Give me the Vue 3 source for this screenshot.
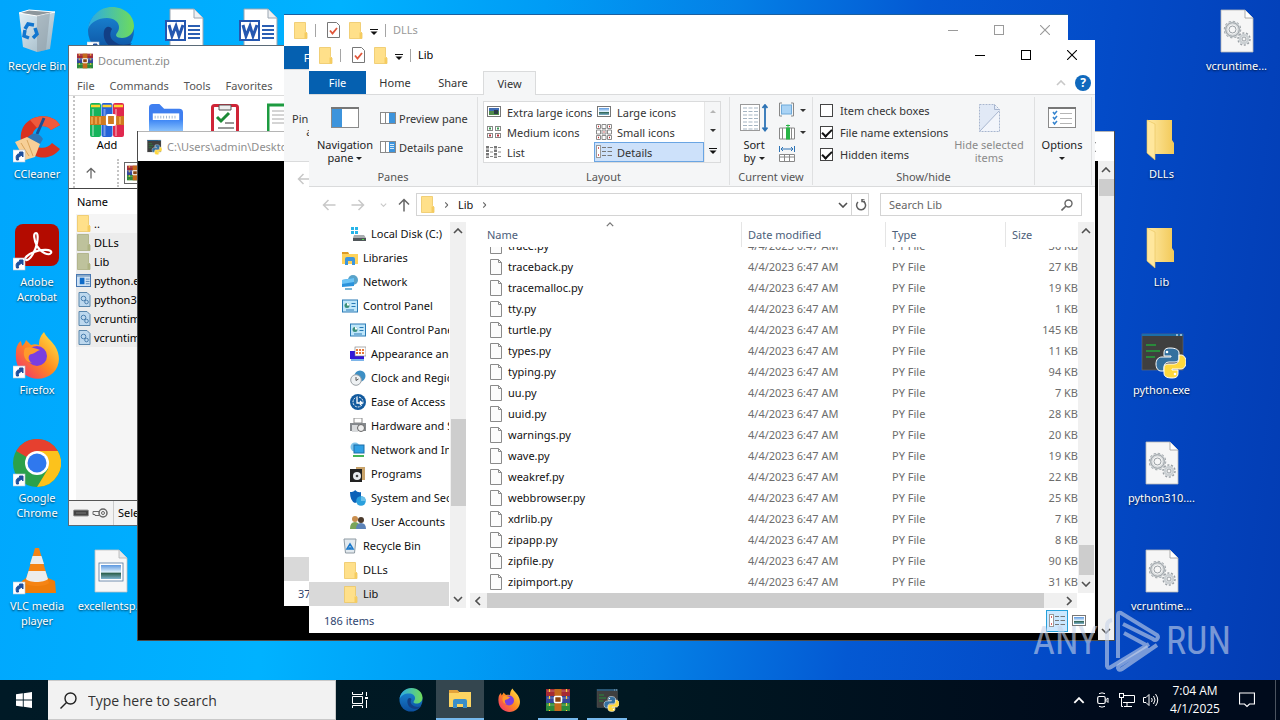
<template>
    <div class="screen">
        <svg class="sprite" aria-hidden="true">
            <defs>
                <linearGradient id="g-edge" x1="0" y1="0" x2="1" y2="0">
                    <stop offset="0" stop-color="#2aa9e8" />
                    <stop offset="1" stop-color="#6fdc5a" />
                </linearGradient>
                <linearGradient id="g-edge2" x1="0" y1="0" x2="0" y2="1">
                    <stop offset="0" stop-color="#1b8ad8" />
                    <stop offset="1" stop-color="#0c4f9e" />
                </linearGradient>
                <linearGradient id="g-fox" x1="1" y1="0" x2="0" y2="1">
                    <stop offset="0" stop-color="#fff04a" />
                    <stop offset="0.5" stop-color="#ff8a1f" />
                    <stop offset="1" stop-color="#f0257a" />
                </linearGradient>
                <linearGradient id="g-bin" x1="0" y1="0" x2="1" y2="1">
                    <stop offset="0" stop-color="#f5f7f8" />
                    <stop offset="1" stop-color="#a9b4bb" />
                </linearGradient>
                <linearGradient id="g-sheet" x1="0" y1="0" x2="1" y2="0">
                    <stop offset="0" stop-color="#ffeaa6" />
                    <stop offset="1" stop-color="#f2c958" />
                </linearGradient>
                <linearGradient id="g-blue" x1="0" y1="0" x2="0" y2="1">
                    <stop offset="0" stop-color="#3f87f5" />
                    <stop offset="1" stop-color="#a9dbff" />
                </linearGradient>
                <linearGradient id="g-photo" x1="0" y1="0" x2="0" y2="1">
                    <stop offset="0" stop-color="#5c98e0" />
                    <stop offset="0.5" stop-color="#dceefa" />
                    <stop offset="0.6" stop-color="#2f6350" />
                    <stop offset="1" stop-color="#7fb3cf" />
                </linearGradient>
            </defs>

            <!-- desktop icons -->
            <symbol id="i-shortcut" viewBox="0 0 48 48">
                <rect x="0" y="35" width="12" height="12" fill="#fff" stroke="#b9c7d6" stroke-width=".6" />
                <path d="M3.500 45c-1-4 0-6 3-6.300V37H10v5L8.500 40.500C6 41 5 43 5.500 45z" fill="#1e4f9c" stroke="#1e4f9c" />
            </symbol>
            <symbol id="i-bin" viewBox="0 0 48 48">
                <path d="M6 6l10-3 26 2-5 37-13 3-14-5z" fill="url(#g-bin)" opacity=".92" />
                <path d="M6 6l18 3 18-4-26-2z" fill="#8d979d" stroke="#fff" stroke-width="1" />
                <path d="M24 9l13-3-4 37-9 2z" fill="#8c989f" opacity=".5" />
                <path d="M12 22l3-5 6 1M22 21l2 6-4 4M16 31l-5-2 1-6" fill="none" stroke="#1276cf" stroke-width="3.500" />
            </symbol>
            <symbol id="i-edge" viewBox="0 0 48 48">
                <circle cx="24" cy="24" r="23" fill="url(#g-edge2)" />
                <path d="M1 22C3 9 13 0 25 0c13 0 22 9 22 19 0 8-6 12-12 12-6 0-7-3-5-5 1-2 2-3 2-6 0-5-5-9-12-9C11 11 4 15 1 22z" fill="url(#g-edge)" />
                <path d="M17 24c-2 11 7 19 17 18 4 0 8-2 11-6-5 2-12 3-17-1-5-3-6-8-3-13-3-4-7-2-8 2z" fill="#123f86" />
            </symbol>
            <symbol id="i-word" viewBox="0 0 48 48">
                <path d="M9 2h24l9 9v37H9z" fill="#fff" stroke="#9aa5b1" stroke-width="1" />
                <path d="M33 2v9h9" fill="#edf0f3" stroke="#9aa5b1" stroke-width="1" />
                <path d="M27 19h12M27 23h12M27 27h12M27 31h12" stroke="#2b5fb3" stroke-width="2" />
                <rect x="5" y="14" width="19" height="19" fill="#fff" stroke="#2457b0" stroke-width="2" />
                <path d="M8 18l3 11 4-10 3 10 4-11" fill="none" stroke="#2457b0" stroke-width="3" />
            </symbol>
            <symbol id="i-ccleaner" viewBox="0 0 48 48">
                <path d="M47 10C41 0 26-1 17 5 9 10 7 18 8 27l7 9c8 9 24 9 32-2l-8-6c-5 7-16 6-19-1-3-8 2-15 9-16 4 0 7 1 9 4z" fill="#d9321f" />
                <path d="M17 5C26-1 41 0 47 10l-9 5c-3-4-9-5-14-2z" fill="#ef5a3c" />
                <path d="M31 3L24 19" stroke="#1d4f93" stroke-width="3" />
                <path d="M14 24c2-6 12-8 16 0l-3 5z" fill="#2f77b8" />
                <path d="M2 27l12-5 13 7-5 13-10 3z" fill="#f7cf97" />
                <path d="M8 28l8 13M14 25l6 16" stroke="#d9a45c" stroke-width="1" />
            </symbol>
            <symbol id="i-acrobat" viewBox="0 0 48 48">
                <rect x="2" y="1" width="44" height="42" rx="8" fill="#b30b00" />
                <path d="M23 10c-3 0-2 7 1 13 4 7 12 10 14 7 2-4-10-4-17-1-6 2-11 7-8 8 4 1 10-10 11-17 1-5 1-10-1-10z" fill="none" stroke="#fff" stroke-width="2.200" />
            </symbol>
            <symbol id="i-firefox" viewBox="0 0 48 48">
                <path d="M3 21c0-5 2-9 5-11l1 5c2-2 3-3 4-6l5 5c3-1 5-1 8 0 0-6 2-10 5-13 2 5 7 8 11 14 6 10 5 20-2 27-8 7-20 8-29 1C5 38 2 30 3 21z" fill="url(#g-fox)" />
                <circle cx="24" cy="25" r="10" fill="#7a3ee0" />
                <path d="M12 17c5-2 10 0 15 2-4 1-4 3-8 4-4 0-5 6 0 9-7-1-10-8-7-15z" fill="#ff9a2a" />
            </symbol>
            <symbol id="i-chrome" viewBox="0 0 48 48">
                <circle cx="24" cy="24" r="24" fill="#2ba14b" />
                <path d="M24 24L3.200 12A24 24 0 0 1 44.800 12z" fill="#e6402f" />
                <path d="M24 12h20.800A24 24 0 0 1 24 48l11-18z" fill="#fcc21c" />
                <circle cx="24" cy="24" r="12" fill="#fff" />
                <circle cx="24" cy="24" r="9.500" fill="#2f78ee" />
            </symbol>
            <symbol id="i-vlc" viewBox="0 0 48 48">
                <path d="M13 31h22l7 3 1 12H4l5-12z" fill="#ee7d0b" />
                <path d="M22 1h4l10 35c-3 4-21 4-24 0z" fill="#f58414" />
                <path d="M19.500 9h9l2.500 8H17zM15.500 24h17l2.500 8c-4 4-19 4-22 0z" fill="#ececec" />
            </symbol>
            <symbol id="i-image" viewBox="0 0 48 48">
                <path d="M8 3h24l8 8v34H8z" fill="#f7f7f7" stroke="#c2c2c2" stroke-width=".8" />
                <path d="M32 3v8h8" fill="#e4e8ec" stroke="#b3b3b3" stroke-width=".8" />
                <rect x="12" y="16" width="24" height="18" fill="#fff" stroke="#54779e" stroke-width=".8" />
                <rect x="14" y="18" width="20" height="14" fill="url(#g-photo)" />
            </symbol>
            <symbol id="i-bigfolder" viewBox="0 0 48 48">
                <path d="M9 5h25v20l2 3v11H17z" fill="url(#g-sheet)" />
                <path d="M9 5l8 4v36l-8-7z" fill="#ffe79d" stroke="#e7c35c" stroke-width=".6" />
            </symbol>
            <symbol id="i-dll" viewBox="0 0 48 48">
                <path d="M8 3h24l8 8v34H8z" fill="#f6f6f6" stroke="#b9b9b9" stroke-width=".8" />
                <path d="M32 3v8h8" fill="#fff" stroke="#9b9b9b" stroke-width=".8" />
                <g fill="none" stroke="#9aa0a5">
                    <circle cx="19.500" cy="22.500" r="8" stroke-width="1.500" stroke-dasharray="2.200 2" />
                    <circle cx="19.500" cy="22.500" r="6.500" stroke="#d4d8da" stroke-width="3" />
                    <circle cx="19.500" cy="22.500" r="6.800" stroke-width="1" />
                    <circle cx="19.500" cy="22.500" r="3.500" stroke-width="1" />
                    <circle cx="31" cy="32" r="6" stroke-width="1.500" stroke-dasharray="2 1.700" />
                    <circle cx="31" cy="32" r="4" stroke="#cbd0d3" stroke-width="2.500" />
                    <circle cx="31" cy="32" r="2" stroke-width="1" />
                </g>
            </symbol>
            <symbol id="i-python" viewBox="0 0 48 48">
                <rect x="4" y="3" width="41" height="36" fill="#3f3f3f" stroke="#6a6a6a" stroke-width=".6" />
                <rect x="4" y="3" width="41" height="2" fill="#1c6ea8" />
                <path d="M38 4h2M42 4h2" stroke="#fff" />
                <path d="M8 14h10M8 20h14M8 26h9" stroke="#24a33b" stroke-width="1.500" />
                <path d="M32 17c-5 0-6 2-6 5v3h7v1h-9c-4 0-6 3-6 7s2 7 5 7h3v-4c0-3 2-5 5-5h6c3 0 4-2 4-4v-5c0-3-3-5-9-5z" fill="#34709f" stroke="#fff" stroke-width="1" />
                <path d="M34 47c5 0 6-2 6-5v-3h-6v-1h9c3 0 5-3 5-7s-2-7-5-7h-2v4c0 3-2 5-5 5h-6c-3 0-4 2-4 4v5c0 3 2 5 8 5z" fill="#ffd83d" stroke="#fff" stroke-width="1" />
                <circle cx="29" cy="21" r="1.300" fill="#fff" />
                <circle cx="37" cy="43" r="1.300" fill="#fff" />
            </symbol>

            <!-- archiver -->
            <symbol id="i-rar" viewBox="0 0 24 24">
                <rect y="1" width="24" height="7" fill="#a52a34" />
                <rect y="8" width="24" height="7" fill="#34479b" />
                <rect y="15" width="24" height="8" fill="#2b8a3c" />
                <path d="M1 3h22M1 10h22M1 17h22" stroke="#fff" stroke-width="1" opacity=".3" />
                <path d="M3.500 1v22M20.500 1v22" stroke="#ffce3a" stroke-width="1.200" stroke-dasharray="3 4" />
                <rect x="8.500" y="1" width="7" height="22" fill="#c46a1c" />
                <rect x="8.500" y="8.500" width="7" height="6" rx="1" fill="#8a4310" stroke="#fff" stroke-width="1.600" />
            </symbol>
            <symbol id="i-books" viewBox="0 0 34 34">
                <rect x="0" y="0" width="11" height="34" rx="2" fill="#17b45c" />
                <rect x="11.500" y="0" width="11" height="34" rx="2" fill="#2563d8" />
                <rect x="23" y="0" width="11" height="34" rx="2" fill="#e0284e" />
                <path d="M1 3h9M12.500 3h9M24 3h9" stroke="#ffd42e" stroke-width="2.500" />
                <path d="M3 6v27M14.500 6v27M26 6v27" stroke="#fff" stroke-width="2" opacity=".35" />
                <path d="M0 13h34v9H0z" fill="#cf7a1f" />
                <path d="M2 14v7M6 14v7M10 14v7M30 14v7" stroke="#f2ad55" stroke-width="1.500" />
                <rect x="17" y="12" width="8" height="10" rx="1" fill="#cf7a1f" stroke="#fff" stroke-width="2.200" />
            </symbol>
            <symbol id="i-extract" viewBox="0 0 36 34">
                <path d="M0 4q0-4 4-4h7l5 5h16q4 0 4 4v25H0z" fill="#3f7ff0" />
                <path d="M4 10h28v12H4z" fill="#fff" />
                <path d="M6 14h24" stroke="#9fb4cf" stroke-width="3" stroke-dasharray="1 2" />
                <path d="M0 17h36v17H0z" fill="url(#g-blue)" />
            </symbol>
            <symbol id="i-test" viewBox="0 0 28 34">
                <rect x="1.500" y="2.500" width="25" height="31" rx="2" fill="#fff" stroke="#cf2437" stroke-width="3" />
                <path d="M8 2h12v5H8z" fill="#eee" stroke="#555" />
                <path d="M6 14l4 4 8-8" fill="none" stroke="#1c8a36" stroke-width="3" />
                <path d="M14 20h9M7 25h16" stroke="#777" stroke-width="1.500" />
            </symbol>
            <symbol id="i-view" viewBox="0 0 34 34">
                <path d="M1 2h25v32H1z" fill="#fff" stroke="#1d9b40" stroke-width="3" />
                <path d="M26 3h7v31h-7z" fill="#fff" stroke="#cf2437" stroke-width="3" />
                <path d="M5 8h18M5 12h18M5 16h18M5 20h18" stroke="#aaa" />
            </symbol>
            <symbol id="i-exe" viewBox="0 0 16 14">
                <rect x=".5" y=".5" width="15" height="13" fill="#cfe2f4" stroke="#3c6fae" />
                <path d="M1 1h14v2H1z" fill="#89a9c8" />
                <rect x="4" y="4" width="5" height="7" fill="#0f6bc8" />
                <path d="M10.500 5.500h4M10.500 8h4M10.500 10.500h4" stroke="#5585b5" />
            </symbol>
            <symbol id="i-dllsmall" viewBox="0 0 12 15">
                <path d="M.5.5h8l3 3v11H.5z" fill="#bdd8ee" stroke="#5a87ad" />
                <circle cx="5" cy="6.500" r="2.300" fill="none" stroke="#4b7fae" />
                <circle cx="8" cy="10" r="1.800" fill="none" stroke="#4b7fae" />
            </symbol>
            <symbol id="i-drive" viewBox="0 0 16 9">
                <rect x=".5" y="1.500" width="15" height="6" rx="1" fill="#444" stroke="#999" />
                <path d="M3 4.500h10" stroke="#777" />
            </symbol>
            <symbol id="i-key" viewBox="0 0 16 11">
                <circle cx="11" cy="5.500" r="4" fill="none" stroke="#666" stroke-width="1.500" />
                <circle cx="11" cy="5.500" r="1.500" fill="none" stroke="#666" />
                <path d="M7 4H1v3h2v1h4" fill="none" stroke="#666" />
            </symbol>

            <!-- explorer -->
            <symbol id="i-folder" viewBox="0 0 14 17">
                <path d="M.5.5h11v9l1.500 1.500v5.500H.5z" fill="#ffe08a" stroke="#edc763" stroke-width=".8" />
                <path d="M10.500 10.500h2.500v6h-2.500z" fill="#f5cc60" />
            </symbol>
            <symbol id="i-props" viewBox="0 0 13 16">
                <path d="M.5.5h9l3 3v12H.5z" fill="#fff" stroke="#777" />
                <path d="M3 8.500l2.500 3L10 6" fill="none" stroke="#e0563a" stroke-width="1.800" />
            </symbol>
            <symbol id="i-qat" viewBox="0 0 8 6">
                <path d="M0 .5h8" stroke="#111" />
                <path d="M.5 2.500h7L4 6z" fill="#111" />
            </symbol>
            <symbol id="i-caret" viewBox="0 0 6 3"><path d="M0 0h6L3 3z" fill="currentColor" /></symbol>
            <symbol id="i-chev" viewBox="0 0 10 6">
                <path d="M1 1l4 4 4-4" fill="none" stroke="currentColor" stroke-width="1.600" />
            </symbol>
            <symbol id="i-arrow" viewBox="0 0 14 12">
                <path d="M13.500 6H1.500M6.500 1l-5 5 5 5" fill="none" stroke="currentColor" stroke-width="1.500" />
            </symbol>
            <symbol id="i-min" viewBox="0 0 10 10"><path d="M0 5.500h10" stroke="currentColor" /></symbol>
            <symbol id="i-max" viewBox="0 0 10 10">
                <rect x=".5" y=".5" width="9" height="9" fill="none" stroke="currentColor" />
            </symbol>
            <symbol id="i-close" viewBox="0 0 10 10">
                <path d="M0 0l10 10M10 0L0 10" stroke="currentColor" stroke-width="1.100" />
            </symbol>
            <symbol id="i-file" viewBox="0 0 12 16">
                <path d="M.5.5h8l3 3v12H.5z" fill="#fcfcfc" stroke="#8a8a8a" />
                <path d="M8.500.5v3h3" fill="none" stroke="#8a8a8a" />
            </symbol>
            <symbol id="i-navpane" viewBox="0 0 28 21">
                <rect x=".5" y=".5" width="27" height="20" fill="#fff" stroke="#8a8a8a" />
                <path d="M0 1h28" stroke="#777" stroke-width="2" />
                <rect x="1" y="2" width="10" height="18" fill="#3d94dc" />
            </symbol>
            <symbol id="i-preview" viewBox="0 0 16 12">
                <rect x=".5" y=".5" width="15" height="11" fill="#fff" stroke="#8a8a8a" />
                <path d="M5.500 1v10" stroke="#8a8a8a" />
                <rect x="9" y="1" width="6" height="10" fill="#3d94dc" />
            </symbol>
            <symbol id="i-detpane" viewBox="0 0 16 12">
                <rect x=".5" y=".5" width="15" height="11" fill="#fff" stroke="#8a8a8a" />
                <path d="M5.500 1v10" stroke="#8a8a8a" />
                <rect x="9" y="1" width="6" height="10" fill="#3d94dc" />
                <path d="M10 3.500h4M10 5.500h4M10 7.500h4" stroke="#d5e9f8" />
            </symbol>
            <symbol id="i-pic" viewBox="0 0 16 14">
                <rect x="1.500" y="1.500" width="13" height="10" fill="#fff" stroke="#777" />
                <rect x="3" y="3" width="10" height="7" fill="url(#g-photo)" />
            </symbol>
            <symbol id="i-xlpic" viewBox="0 0 16 14">
                <rect x="1.500" y="1.500" width="13" height="10" fill="#fff" stroke="#777" />
                <rect x="3" y="3" width="10" height="7" fill="#4f8a49" />
                <rect x="3" y="3" width="10" height="3" fill="#3f6cb5" />
                <rect x="8" y="5" width="4" height="4" fill="#2c3c46" />
            </symbol>
            <symbol id="i-medium" viewBox="0 0 16 14">
                <g fill="#fff" stroke="#888">
                    <rect x="1.500" y="1.500" width="5" height="4" /><rect x="9.500" y="1.500" width="5" height="4" />
                    <rect x="1.500" y="8.500" width="5" height="4" /><rect x="9.500" y="8.500" width="5" height="4" />
                </g>
                <path d="M3 3.500h2M11 3.500h2" stroke="#3a9a52" stroke-width="2" />
                <path d="M3 10.500h2M11 10.500h2" stroke="#b8323a" stroke-width="2" />
            </symbol>
            <symbol id="i-small" viewBox="0 0 16 16">
                <g fill="#fff" stroke="#8a8a8a">
                    <path d="M.5.5h4v4h-4zM6 .5h4v4H6zM11.500.5h4v4h-4zM.5 6h4v4h-4zM6 6h4v4H6zM11.500 6h4v4h-4zM.5 11.500h4v4h-4zM6 11.500h4v4H6zM11.500 11.500h4v4h-4z" />
                </g>
                <path d="M2 2.500h1M7.500 8h1M2 13.500h1M13 2.500h1M13 13.500h1" stroke="#c33" stroke-width="1.500" />
            </symbol>
            <symbol id="i-list" viewBox="0 0 16 14">
                <path d="M1.500 1v12M9.500 1v12" stroke="#777" stroke-width="3" stroke-dasharray="2.500 1" fill="none" />
                <path d="M4 2.500h3M4 7h3M4 11.500h3M12 2.500h3M12 7h3M12 11.500h3" stroke="#888" />
            </symbol>
            <symbol id="i-details" viewBox="0 0 16 14">
                <rect x=".5" y=".5" width="4" height="12" fill="#fff" stroke="#999" />
                <path d="M2 3h1M2 10h1" stroke="#c33" stroke-width="1.500" />
                <path d="M6 2.500h4M11.500 2.500H16M6 6.500h4M11.500 6.500H16M6 10.500h4M11.500 10.500H16" stroke="#777" />
            </symbol>
            <symbol id="i-sort" viewBox="0 0 28 28">
                <rect x=".5" y=".5" width="19" height="26" fill="#fff" stroke="#9a9a9a" />
                <path d="M3 4h15M3 7.500h15M3 11h15M3 14.500h15M3 18h15M3 21.500h15M3 25h15" stroke="#a5b5c3" stroke-dasharray="4 1.500" />
                <path d="M25 2v23M22.500 4L25 1l2.500 3M22.500 23.500l2.500 3 2.500-3" fill="none" stroke="#2d73b5" stroke-width="1.800" />
            </symbol>
            <symbol id="i-group" viewBox="0 0 16 15">
                <path d="M3 .5H.5v13H3M12 .5h2.500v13H12" fill="none" stroke="#888" />
                <rect x="2.500" y="2.500" width="10" height="9" fill="#a9d3f5" stroke="#6fa9d9" />
            </symbol>
            <symbol id="i-addcol" viewBox="0 0 16 15">
                <path d="M.5 3.500h15v11H.5zM3.500 3.500v11M12.500 3.500v11" fill="#fff" stroke="#888" />
                <rect x="7" y="3" width="4" height="12" fill="#28b446" />
                <path d="M7 1h4M9 0v3" stroke="#28b446" />
            </symbol>
            <symbol id="i-sizecol" viewBox="0 0 16 16">
                <path d="M.5 0v6M15.500 0v6M2 3h12M4 1L2 3l2 2M12 1l2 2-2 2" fill="none" stroke="#2d73b5" />
                <path d="M.5 8.500h15v7H.5zM.5 11h15M5.500 9v7M10.500 9v7" fill="#fff" stroke="#888" />
            </symbol>
            <symbol id="i-hide" viewBox="0 0 21 28">
                <path d="M.5.5h15l5 5v22H.5z" fill="#f2f5fb" stroke="#a8b6cf" stroke-dasharray="2 1" />
                <path d="M1 27L20 7 15 1H1z" fill="#e1e9f6" />
                <path d="M.5 27.500L20 7M15.500.5v5h5" fill="none" stroke="#a8b6cf" />
            </symbol>
            <symbol id="i-options" viewBox="0 0 28 21">
                <rect x=".5" y=".5" width="27" height="20" fill="#fff" stroke="#8a8a8a" />
                <path d="M0 1h28" stroke="#777" stroke-width="2" />
                <path d="M5 5l1.500 2L9 4M5 10l1.500 2L9 9M5 15l1.500 2L9 14" fill="none" stroke="#3785cf" stroke-width="1.500" />
                <path d="M12 6.500h12M12 11.500h12M12 16.500h12" stroke="#b5b5b5" />
            </symbol>
            <symbol id="i-refresh" viewBox="0 0 12 12">
                <path d="M3 3a4.500 4.500 0 1 0 5.500-.5M7 0h2.500M10 2.500H7V0" fill="none" stroke="#5e5e5e" stroke-width="1.500" />
            </symbol>
            <symbol id="i-search" viewBox="0 0 12 12">
                <circle cx="7.500" cy="4.500" r="3.500" fill="none" stroke="currentColor" stroke-width="1.400" />
                <path d="M5 7L.5 11.500" stroke="currentColor" stroke-width="1.600" />
            </symbol>

            <!-- navigation tree -->
            <symbol id="t-disk" viewBox="0 0 16 16">
                <path d="M1 1h3v3H1zM5 1h3v3H5zM1 5h3v3H1zM5 5h3v3H5z" fill="#27b4e8" />
                <path d="M4 9h10l2 3v3H3v-3z" fill="#a9adb0" />
                <path d="M3 12h13v3H3z" fill="#50565a" />
                <path d="M12 13.500h2" stroke="#4fe04a" />
            </symbol>
            <symbol id="t-lib" viewBox="0 0 16 16">
                <path d="M0 2h6l1 2h9v10H0z" fill="#ffd35a" />
                <path d="M0 2h6l1 2H0z" fill="#dd9c27" />
                <path d="M3 15V9q0-2 2-2h6q2 0 2 2v6h-3v-4H6v4z" fill="#3d95dd" />
            </symbol>
            <symbol id="t-net" viewBox="0 0 16 16">
                <circle cx="11" cy="6" r="5" fill="#5aa3c9" />
                <path d="M0 6l12-2v8L0 13z" fill="#2b93dc" />
                <path d="M0 6l12-2v4L0 10z" fill="#6cc4f5" />
                <path d="M3 15h7" stroke="#4a9bc7" stroke-width="1.500" />
            </symbol>
            <symbol id="t-panel" viewBox="0 0 16 13">
                <rect x=".5" y=".5" width="15" height="12" fill="#bfe6fa" stroke="#2a7bb6" />
                <circle cx="5" cy="6" r="2.500" fill="#3b8f7a" />
                <path d="M5 6V3.500A2.500 2.500 0 0 1 7.500 6z" fill="#fff" />
                <path d="M9.500 4h4M9.500 7h4M4 10.500h8" stroke="#2a7bb6" />
            </symbol>
            <symbol id="t-look" viewBox="0 0 16 14">
                <rect x="0" y="4" width="14" height="8" fill="#3018d8" />
                <rect x="5" y="0" width="11" height="9" fill="#fff" stroke="#777" stroke-width=".6" />
                <path d="M6 3h9M6 6h9" stroke="#e87a3a" stroke-width="2" stroke-dasharray="2 1" />
                <path d="M1 13h13" stroke="#7db5e8" stroke-width="2" />
            </symbol>
            <symbol id="t-clock" viewBox="0 0 16 16">
                <circle cx="10" cy="6" r="5.500" fill="#3d8fc4" />
                <circle cx="6" cy="10" r="5.300" fill="#eef1f3" stroke="#9aa0a5" />
                <path d="M6 7v3.500l2.500-1.500" fill="none" stroke="#555" />
            </symbol>
            <symbol id="t-ease" viewBox="0 0 16 16">
                <circle cx="8" cy="8" r="8" fill="#125a9e" />
                <circle cx="8" cy="8" r="5" fill="none" stroke="#fff" stroke-dasharray="2 1" />
                <path d="M7 4v5h5M10 7l2 2-2 2" fill="none" stroke="#fff" stroke-width="1.300" />
            </symbol>
            <symbol id="t-printer" viewBox="0 0 16 16">
                <path d="M4 0h8v5H4z" fill="#fff" stroke="#8b8b8b" />
                <path d="M0 5h16v8H0z" fill="#85898d" />
                <path d="M2 7h6v7H2z" fill="#d8dadc" />
                <circle cx="11" cy="10" r="3.500" fill="#eee" stroke="#666" />
            </symbol>
            <symbol id="t-inet" viewBox="0 0 16 16">
                <circle cx="5" cy="5" r="4.500" fill="#7ec3ea" />
                <rect x="4" y="3" width="10" height="8" fill="#2f9fe4" stroke="#1c6ea8" />
                <path d="M3 14h11" stroke="#44b556" stroke-width="2" />
            </symbol>
            <symbol id="t-prog" viewBox="0 0 16 16">
                <path d="M6 1h9v13H6z" fill="#c9a36a" />
                <rect x="0" y="3" width="12" height="13" fill="#222" />
                <circle cx="7" cy="10" r="4" fill="#e9ecef" />
                <circle cx="7" cy="10" r="1.300" fill="#444" />
            </symbol>
            <symbol id="t-sec" viewBox="0 0 16 16">
                <path d="M0 2q4 0 5-2 3 3 6 2v5q-2 5-6 6Q0 11 0 2z" fill="#0c62b8" />
                <circle cx="11" cy="11" r="4.800" fill="#2aa0dd" />
                <path d="M11 11V6.200A4.800 4.800 0 0 1 15.800 11z" fill="#6cc1ea" />
            </symbol>
            <symbol id="t-users" viewBox="0 0 16 16">
                <circle cx="5" cy="5" r="3" fill="#c98e4e" />
                <path d="M0 15q0-7 5-7t5 7z" fill="#7aa45a" />
                <circle cx="11" cy="6" r="3" fill="#4b3a2c" />
                <path d="M6 15q0-6 5-6t5 6z" fill="#5c83b8" />
            </symbol>
            <symbol id="t-bin" viewBox="0 0 16 16">
                <path d="M2 1h12l-1.500 14h-9z" fill="#e3eaef" stroke="#8e9aa3" />
                <path d="M5 11l3-5 3 5zM7 10h2" fill="none" stroke="#1a79cc" stroke-width="1.600" />
            </symbol>

            <!-- taskbar -->
            <symbol id="b-win" viewBox="0 0 16 16">
                <path d="M0 2.300L6.800 1.300v6.300H0zM7.700 1.200L16 0v7.600H7.700zM0 8.500h6.800v6.300L0 13.800zM7.700 8.500H16V16l-8.300-1.200z" fill="#fff" />
            </symbol>
            <symbol id="b-search" viewBox="0 0 17 17">
                <circle cx="10.500" cy="6.500" r="5.500" fill="none" stroke="currentColor" stroke-width="1.400" />
                <path d="M6.500 10.500l-6 6" stroke="currentColor" stroke-width="1.400" />
            </symbol>
            <symbol id="b-taskview" viewBox="0 0 16 16">
                <path d="M.5 0v2.500h10V0M.5 16v-2.500h10V16M.5 4.500h10v7H.5zM14.500 0v4M14.500 8v8" fill="none" stroke="#fff" />
                <path d="M13 5h3v2h-3z" fill="#fff" />
            </symbol>
            <symbol id="b-explorer" viewBox="0 0 24 24">
                <path d="M1 3h8l2 2h12v15H1z" fill="#fcd462" />
                <path d="M1 3h8l2 2v1H1z" fill="#e3a33a" />
                <path d="M5 21v-7q0-2 2-2h10q2 0 2 2v7h-4v-4H9v4z" fill="#3b8fc9" />
            </symbol>
            <symbol id="b-cam" viewBox="0 0 12 16">
                <rect x=".7" y="4.500" width="7.500" height="7" rx="1.500" fill="none" stroke="#fff" stroke-width="1.200" />
                <path d="M8.500 8l2.500-2v4.500z" fill="none" stroke="#fff" />
                <path d="M2 1.700Q5 0 8 1.700M2 14.300q3 1.700 6 0" fill="none" stroke="#fff" />
            </symbol>
            <symbol id="b-net" viewBox="0 0 16 14">
                <path d="M4 2.500h11.500v7H4M8 10v3M5 13.500h8M2.500 4v9.500H4" fill="none" stroke="#fff" />
                <rect x=".5" y=".5" width="4" height="4" fill="none" stroke="#fff" />
            </symbol>
            <symbol id="b-vol" viewBox="0 0 16 14">
                <path d="M.5 4.500h2.500l3-3v11l-3-3H.5z" fill="none" stroke="#fff" />
                <path d="M8.500 5q1.500 2 0 4M10.500 3q3 4 0 8M12.500 1q4.500 6 0 12" fill="none" stroke="#fff" />
            </symbol>
            <symbol id="b-note" viewBox="0 0 16 16">
                <path d="M.5 1h15v11h-5L8 14.500 5.500 12h-5z" fill="none" stroke="#fff" stroke-width="1.200" />
            </symbol>
        </svg>

        <main class="desktop">
            <div class="desktop-icons">
                <a v-for="item in shortcuts" :key="item.id" href="#" class="shortcut"
                    :style="{ gridColumn: item.col, gridRow: item.row }">
                    <span class="shortcut-pic">
                        <svg><use :href="'#' + item.icon" /></svg>
                        <svg v-if="item.link" class="link-badge"><use href="#i-shortcut" /></svg>
                    </span>
                    <span class="shortcut-name">{{ item.name }}</span>
                </a>
            </div>

            <section class="window rar">
                <header class="rar-title">
                    <svg class="s16"><use href="#i-rar" /></svg>
                    <span>Document.zip</span>
                </header>
                <nav class="rar-menu">
                    <a v-for="m in rarMenu" :key="m" href="#">{{ m }}</a>
                </nav>
                <div class="rar-tools">
                    <button v-for="t in rarTools" :key="t.icon" type="button" class="rar-tool">
                        <svg><use :href="'#' + t.icon" /></svg>
                        <span>{{ t.name }}</span>
                    </button>
                </div>
                <div class="rar-path">
                    <button type="button" class="rar-up" aria-label="Up">
                        <svg><use href="#i-arrow" /></svg>
                    </button>
                    <div class="rar-address"><svg class="s16"><use href="#i-rar" /></svg></div>
                </div>
                <div class="rar-list">
                    <div class="rar-head">Name</div>
                    <div v-for="f in rarFiles" :key="f.id" class="rar-row" :class="{ picked: f.picked }">
                        <svg :class="f.cls"><use :href="'#' + f.icon" /></svg>
                        <span>{{ f.name }}</span>
                    </div>
                </div>
                <footer class="rar-status">
                    <svg class="s16"><use href="#i-drive" /></svg>
                    <svg class="s16"><use href="#i-key" /></svg>
                    <span>Selected</span>
                </footer>
            </section>

            <section class="window cmd">
                <header class="cmd-title">
                    <svg class="s16"><use href="#i-python" /></svg>
                    <span>C:\Users\admin\Desktop</span>
                    <div class="controls">
                        <button v-for="c in controls" :key="c.icon" type="button" :aria-label="c.label">
                            <svg><use :href="'#' + c.icon" /></svg>
                        </button>
                    </div>
                </header>
                <div class="cmd-body">
                    <div class="vbar">
                        <svg class="chev up"><use href="#i-chev" /></svg>
                        <div class="cmd-thumb"></div>
                        <svg class="chev last"><use href="#i-chev" /></svg>
                    </div>
                </div>
            </section>

            <section class="window dlls">
                <header class="titlebar inactive">
                    <svg class="fold"><use href="#i-folder" /></svg>
                    <i class="bar"></i>
                    <svg class="props"><use href="#i-props" /></svg>
                    <svg class="fold"><use href="#i-folder" /></svg>
                    <svg class="qat"><use href="#i-qat" /></svg>
                    <i class="bar"></i>
                    <span class="caption">DLLs</span>
                    <div class="controls">
                        <button v-for="c in controls" :key="c.icon" type="button" :aria-label="c.label">
                            <svg><use :href="'#' + c.icon" /></svg>
                        </button>
                    </div>
                </header>
                <div class="tabs"><button type="button" class="file-tab">File</button></div>
                <div class="ribbon dlls-ribbon">
                    <button type="button" class="pin">Pin to Quick<br>access</button>
                </div>
                <div class="dlls-nav"><svg class="arrow faint"><use href="#i-arrow" /></svg></div>
                <div class="dlls-selected"></div>
                <footer class="statusbar"><span>37 items</span></footer>
            </section>

            <section class="window lib">
                <header class="titlebar">
                    <svg class="fold"><use href="#i-folder" /></svg>
                    <i class="bar"></i>
                    <svg class="props"><use href="#i-props" /></svg>
                    <svg class="fold"><use href="#i-folder" /></svg>
                    <svg class="qat"><use href="#i-qat" /></svg>
                    <i class="bar"></i>
                    <span class="caption">Lib</span>
                    <div class="controls">
                        <button v-for="c in controls" :key="c.icon" type="button" :aria-label="c.label">
                            <svg><use :href="'#' + c.icon" /></svg>
                        </button>
                    </div>
                </header>

                <div class="tabs">
                    <button type="button" class="file-tab">File</button>
                    <button v-for="t in tabs" :key="t" type="button" class="tab" :class="{ active: t === activeTab }"
                        @click="activeTab = t">{{ t }}</button>
                    <div class="tabs-end">
                        <svg class="chev up faint"><use href="#i-chev" /></svg>
                        <button type="button" class="help" aria-label="Help">?</button>
                    </div>
                </div>

                <div class="ribbon">
                    <div class="group panes">
                        <div class="group-body">
                            <button type="button" class="big">
                                <svg class="pane-ico"><use href="#i-navpane" /></svg>
                                <span>Navigation<br>pane <svg class="caret"><use href="#i-caret" /></svg></span>
                            </button>
                            <div class="stack">
                                <button type="button"><svg class="p16"><use href="#i-preview" /></svg>Preview pane</button>
                                <button type="button"><svg class="p16"><use href="#i-detpane" /></svg>Details pane</button>
                            </div>
                        </div>
                        <div class="group-name">Panes</div>
                    </div>
                    <div class="group layout">
                        <div class="group-body">
                            <div class="gallery">
                                <div class="views">
                                    <button v-for="v in views" :key="v.name" type="button"
                                        :class="{ chosen: v.name === view }" @click="view = v.name">
                                        <svg class="s16"><use :href="'#' + v.icon" /></svg>{{ v.name }}
                                    </button>
                                </div>
                                <div class="gallery-bar">
                                    <svg class="caret flip"><use href="#i-caret" /></svg>
                                    <svg class="caret"><use href="#i-caret" /></svg>
                                    <svg class="qat"><use href="#i-qat" /></svg>
                                </div>
                            </div>
                        </div>
                        <div class="group-name">Layout</div>
                    </div>
                    <div class="group current">
                        <div class="group-body">
                            <button type="button" class="big">
                                <svg class="sort-ico"><use href="#i-sort" /></svg>
                                <span>Sort<br>by <svg class="caret"><use href="#i-caret" /></svg></span>
                            </button>
                            <div class="minis">
                                <button type="button" aria-label="Group by">
                                    <svg class="s16"><use href="#i-group" /></svg><svg class="caret"><use href="#i-caret" /></svg>
                                </button>
                                <button type="button" aria-label="Add columns">
                                    <svg class="s16"><use href="#i-addcol" /></svg><svg class="caret"><use href="#i-caret" /></svg>
                                </button>
                                <button type="button" aria-label="Size all columns to fit">
                                    <svg class="s16"><use href="#i-sizecol" /></svg>
                                </button>
                            </div>
                        </div>
                        <div class="group-name">Current view</div>
                    </div>
                    <div class="group show">
                        <div class="group-body">
                            <div class="checks">
                                <label v-for="o in options" :key="o.name">
                                    <input type="checkbox" v-model="o.on">{{ o.name }}
                                </label>
                            </div>
                            <button type="button" class="big dim">
                                <svg class="hide-ico"><use href="#i-hide" /></svg>
                                <span>Hide selected<br>items</span>
                            </button>
                        </div>
                        <div class="group-name">Show/hide</div>
                    </div>
                    <div class="group opts">
                        <div class="group-body">
                            <button type="button" class="big">
                                <svg class="pane-ico"><use href="#i-options" /></svg>
                                <span>Options<br><svg class="caret"><use href="#i-caret" /></svg></span>
                            </button>
                        </div>
                    </div>
                </div>

                <div class="address-row">
                    <button type="button" aria-label="Back"><svg class="arrow faint"><use href="#i-arrow" /></svg></button>
                    <button type="button" aria-label="Forward"><svg class="arrow right faint"><use href="#i-arrow" /></svg></button>
                    <button type="button" class="recent" aria-label="Recent"><svg class="tiny faint"><use href="#i-chev" /></svg></button>
                    <button type="button" class="go-up" aria-label="Up"><svg class="arrow top"><use href="#i-arrow" /></svg></button>
                    <div class="address">
                        <svg class="fold"><use href="#i-folder" /></svg>
                        <svg class="tiny side"><use href="#i-chev" /></svg>
                        <a href="#">Lib</a>
                        <svg class="tiny side"><use href="#i-chev" /></svg>
                        <div class="address-end">
                            <svg class="chev"><use href="#i-chev" /></svg>
                            <button type="button" aria-label="Refresh"><svg class="s12"><use href="#i-refresh" /></svg></button>
                        </div>
                    </div>
                    <div class="search">
                        <input type="text" placeholder="Search Lib" aria-label="Search Lib" v-model="query">
                        <svg class="s12"><use href="#i-search" /></svg>
                    </div>
                </div>

                <div class="content">
                    <ul class="tree">
                        <li v-for="n in tree" :key="n.name" :class="{ deep: n.deep, selected: n.name === 'Lib' }">
                            <svg :class="n.icon === 'i-folder' ? 'fold' : 's16'"><use :href="'#' + n.icon" /></svg>
                            <span>{{ n.name }}</span>
                        </li>
                    </ul>
                    <div class="vbar tree-bar">
                        <svg class="chev up"><use href="#i-chev" /></svg>
                        <div class="tree-thumb"></div>
                        <svg class="chev last"><use href="#i-chev" /></svg>
                    </div>
                    <div class="files">
                        <div class="files-main">
                            <div class="list" ref="list">
                                <table>
                                    <thead>
                                        <tr>
                                            <th class="c-name">Name<svg class="sort-mark"><use href="#i-chev" /></svg></th>
                                            <th class="c-date">Date modified</th>
                                            <th class="c-type">Type</th>
                                            <th class="c-size">Size</th>
                                        </tr>
                                    </thead>
                                    <tbody>
                                        <tr v-for="f in files" :key="f[0]">
                                            <td><span class="file"><svg><use href="#i-file" /></svg>{{ f[0] }}</span></td>
                                            <td>4/4/2023 6:47 AM</td>
                                            <td>PY File</td>
                                            <td>{{ f[1] }} KB</td>
                                        </tr>
                                    </tbody>
                                </table>
                            </div>
                            <div class="vbar list-bar">
                                <svg class="chev up"><use href="#i-chev" /></svg>
                                <div class="list-thumb"></div>
                                <svg class="chev"><use href="#i-chev" /></svg>
                            </div>
                        </div>
                        <div class="hbar">
                            <svg class="chev west"><use href="#i-chev" /></svg>
                            <div class="h-thumb"></div>
                            <svg class="chev east"><use href="#i-chev" /></svg>
                        </div>
                    </div>
                </div>

                <footer class="statusbar">
                    <span>186 items</span>
                    <div class="modes">
                        <button type="button" class="on" aria-label="Details view"><svg class="s16"><use href="#i-details" /></svg></button>
                        <button type="button" aria-label="Large icons view"><svg class="s16"><use href="#i-pic" /></svg></button>
                    </div>
                </footer>
            </section>

            <div class="watermark">
                <span>ANY</span>
                <svg viewBox="0 0 56 62">
                    <path d="M14 48V5q0-3 3-2l36 22q2 2 0 4t-4 0L19 14" />
                    <path d="M8 10Q3 11 3 16v40q1 3 4 1l38-23M20 23l24 13" />
                    <path d="M53 35L18 59q-3 2-4-1 0-2 2-3l28-18" />
                </svg>
                <span>RUN</span>
            </div>
        </main>

        <footer class="taskbar">
            <button type="button" class="start" aria-label="Start"><svg class="s16"><use href="#b-win" /></svg></button>
            <label class="task-search">
                <svg><use href="#b-search" /></svg>
                <input type="text" placeholder="Type here to search">
            </label>
            <button type="button" class="task view" aria-label="Task View"><svg class="s16"><use href="#b-taskview" /></svg></button>
            <button v-for="t in tasks" :key="t.label" type="button" class="task" :class="t.state" :aria-label="t.label">
                <svg class="s24"><use :href="'#' + t.icon" /></svg>
            </button>
            <div class="tray">
                <svg class="chev up"><use href="#i-chev" /></svg>
                <svg class="cam"><use href="#b-cam" /></svg>
                <svg class="s16"><use href="#b-net" /></svg>
                <svg class="s16"><use href="#b-vol" /></svg>
                <time class="clock">7:04 AM<br>4/1/2025</time>
                <svg class="s16"><use href="#b-note" /></svg>
            </div>
        </footer>
    </div>
</template>

<script setup>
    import { ref, onMounted } from 'vue'

    const shortcuts = [
        { id: 1, name: 'Recycle Bin', icon: 'i-bin', col: 1, row: 1 },
        { id: 2, name: 'CCleaner', icon: 'i-ccleaner', col: 1, row: 2, link: true },
        { id: 3, name: 'Adobe Acrobat', icon: 'i-acrobat', col: 1, row: 3, link: true },
        { id: 4, name: 'Firefox', icon: 'i-firefox', col: 1, row: 4, link: true },
        { id: 5, name: 'Google Chrome', icon: 'i-chrome', col: 1, row: 5, link: true },
        { id: 6, name: 'VLC media player', icon: 'i-vlc', col: 1, row: 6, link: true },
        { id: 7, name: '', icon: 'i-edge', col: 2, row: 1, link: true },
        { id: 8, name: 'excellentsp...', icon: 'i-image', col: 2, row: 6 },
        { id: 9, name: '', icon: 'i-word', col: 3, row: 1 },
        { id: 10, name: '', icon: 'i-word', col: 4, row: 1 },
        { id: 11, name: 'vcruntime...', icon: 'i-dll', col: 7, row: 1 },
        { id: 12, name: 'DLLs', icon: 'i-bigfolder', col: 6, row: 2 },
        { id: 13, name: 'Lib', icon: 'i-bigfolder', col: 6, row: 3 },
        { id: 14, name: 'python.exe', icon: 'i-python', col: 6, row: 4 },
        { id: 15, name: 'python310....', icon: 'i-dll', col: 6, row: 5 },
        { id: 16, name: 'vcruntime...', icon: 'i-dll', col: 6, row: 6 }
    ]

    const rarMenu = ['File', 'Commands', 'Tools', 'Favorites']
    const rarTools = [
        { name: 'Add', icon: 'i-books' },
        { name: '', icon: 'i-extract' },
        { name: '', icon: 'i-test' },
        { name: '', icon: 'i-view' }
    ]
    const rarFiles = [
        { id: 1, name: '..', icon: 'i-folder', cls: 'fold' },
        { id: 2, name: 'DLLs', icon: 'i-folder', cls: 'fold', picked: true },
        { id: 3, name: 'Lib', icon: 'i-folder', cls: 'fold', picked: true },
        { id: 4, name: 'python.exe', icon: 'i-exe', cls: 'exe', picked: true },
        { id: 5, name: 'python310.dll', icon: 'i-dllsmall', cls: 'dll', picked: true },
        { id: 6, name: 'vcruntime140.dll', icon: 'i-dllsmall', cls: 'dll', picked: true },
        { id: 7, name: 'vcruntime140_1.dll', icon: 'i-dllsmall', cls: 'dll', picked: true }
    ]

    const controls = [
        { icon: 'i-min', label: 'Minimize' },
        { icon: 'i-max', label: 'Maximize' },
        { icon: 'i-close', label: 'Close' }
    ]

    const tabs = ['Home', 'Share', 'View']
    const activeTab = ref('View')

    const views = [
        { name: 'Extra large icons', icon: 'i-xlpic' },
        { name: 'Large icons', icon: 'i-pic' },
        { name: 'Medium icons', icon: 'i-medium' },
        { name: 'Small icons', icon: 'i-small' },
        { name: 'List', icon: 'i-list' },
        { name: 'Details', icon: 'i-details' }
    ]
    const view = ref('Details')

    const options = ref([
        { name: 'Item check boxes', on: false },
        { name: 'File name extensions', on: true },
        { name: 'Hidden items', on: true }
    ])

    const query = ref('')

    const tree = [
        { name: 'Local Disk (C:)', icon: 't-disk', deep: true },
        { name: 'Libraries', icon: 't-lib' },
        { name: 'Network', icon: 't-net' },
        { name: 'Control Panel', icon: 't-panel' },
        { name: 'All Control Panel Items', icon: 't-panel', deep: true },
        { name: 'Appearance and Personalization', icon: 't-look', deep: true },
        { name: 'Clock and Region', icon: 't-clock', deep: true },
        { name: 'Ease of Access', icon: 't-ease', deep: true },
        { name: 'Hardware and Sound', icon: 't-printer', deep: true },
        { name: 'Network and Internet', icon: 't-inet', deep: true },
        { name: 'Programs', icon: 't-prog', deep: true },
        { name: 'System and Security', icon: 't-sec', deep: true },
        { name: 'User Accounts', icon: 't-users', deep: true },
        { name: 'Recycle Bin', icon: 't-bin' },
        { name: 'DLLs', icon: 'i-folder' },
        { name: 'Lib', icon: 'i-folder' }
    ]

    // file name, size in KB
    const files = [
        ['trace.py', 30],
        ['traceback.py', 27],
        ['tracemalloc.py', 19],
        ['tty.py', 1],
        ['turtle.py', 145],
        ['types.py', 11],
        ['typing.py', 94],
        ['uu.py', 7],
        ['uuid.py', 28],
        ['warnings.py', 20],
        ['wave.py', 19],
        ['weakref.py', 22],
        ['webbrowser.py', 25],
        ['xdrlib.py', 7],
        ['zipapp.py', 8],
        ['zipfile.py', 90],
        ['zipimport.py', 31]
    ]

    const tasks = [
        { label: 'Edge', icon: 'i-edge', state: '' },
        { label: 'File Explorer', icon: 'b-explorer', state: 'current' },
        { label: 'Firefox', icon: 'i-firefox', state: '' },
        { label: 'WinRAR', icon: 'i-rar', state: 'running' },
        { label: 'Python', icon: 'i-python', state: 'running' }
    ]

    // the list is opened scrolled to its end
    const list = ref(null)
    onMounted(() => {
        list.value.scrollTop = list.value.scrollHeight
    })
</script>

<style>
    body {
        margin: 0;
    }
</style>

<style scoped>
    .screen {
        display: flex;
        flex-direction: column;
        height: 100vh;
        overflow: hidden;
        font-family: 'Noto Sans', 'Open Sans', sans-serif;
        font-size: 11px;
        line-height: 16px;
        color: #111;
    }

    .screen * {
        box-sizing: border-box;
    }

    .sprite {
        position: absolute;
        width: 0;
        height: 0;
    }

    svg {
        display: block;
        flex: none;
    }

    button {
        padding: 0;
        border: none;
        background: none;
        font: inherit;
        color: inherit;
    }

    a {
        color: inherit;
        text-decoration: none;
    }

    .s16 { width: 16px; height: 16px; }
    .s12 { width: 12px; height: 12px; }
    .s24 { width: 24px; height: 24px; }
    .fold { width: 14px; height: 17px; }
    .props { width: 13px; height: 16px; }
    .qat { width: 8px; height: 6px; }
    .caret { width: 6px; height: 3px; }
    .chev { width: 10px; height: 6px; color: #505050; }
    .tiny { width: 7px; height: 4px; color: #666; }
    .arrow { width: 14px; height: 12px; }
    .chev.up,
    .flip { transform: rotate(180deg); }
    .side,
    .east { transform: rotate(-90deg); }
    .west,
    .top { transform: rotate(90deg); }
    .right { transform: rotate(180deg); }
    .faint { color: #c8c8c8; }

    /* desktop */
    .desktop {
        position: relative;
        flex: 1;
        min-height: 0;
        background: linear-gradient(97deg, #00a6fd 0%, #00b2ff 25%, #009cf5 40%, #0480e6 54%, #0459d3 68%, #034bc8 82%, #033cb3 100%);
    }

    .desktop-icons {
        display: grid;
        grid-template-columns: repeat(4, 74px) 1fr 75px 75px;
        grid-template-rows: repeat(6, 108px);
        padding: 7px 6px 0 0;
    }

    .shortcut {
        display: flex;
        flex-direction: column;
        align-items: center;
        gap: 3px;
        line-height: 15px;
        color: #fff;
        text-align: center;
        text-shadow: 0 1px 2px rgba(0, 0, 0, 0.7);
    }

    .shortcut-pic {
        position: relative;
        width: 48px;
        height: 48px;
    }

    .shortcut-pic svg {
        width: 48px;
        height: 48px;
    }

    .shortcut-pic .link-badge {
        position: absolute;
        left: 0;
        top: 0;
    }

    .window {
        position: absolute;
        display: flex;
        flex-direction: column;
        overflow: hidden;
        background: #fff;
    }

    .controls {
        display: flex;
        align-self: stretch;
        margin-left: auto;
    }

    .controls button {
        display: flex;
        align-items: center;
        justify-content: center;
        width: 46px;
    }

    .controls svg {
        width: 10px;
        height: 10px;
    }

    /* archiver */
    .rar {
        inset: 45px 691px 154px 68px;
        border: 1px solid #5b6b78;
        color: #000;
    }

    .rar-title {
        display: flex;
        align-items: center;
        gap: 5px;
        height: 30px;
        padding-left: 8px;
        color: #8a8a8a;
    }

    .rar-menu {
        display: flex;
        gap: 15px;
        height: 20px;
        padding-left: 8px;
        line-height: 20px;
        color: #555;
        border-bottom: 1px solid #dcdcdc;
    }

    .rar-tools {
        display: flex;
        gap: 15px;
        height: 62px;
        margin-left: 4px;
        padding: 7px 0 0 10px;
        border-left: 2px dotted #c4c4c4;
    }

    .rar-tool {
        display: flex;
        flex-direction: column;
        align-items: center;
        width: 44px;
    }

    .rar-tool svg {
        width: 34px;
        height: 34px;
    }

    .rar-path {
        display: flex;
        align-items: center;
        height: 30px;
        margin-left: 4px;
        border-left: 2px dotted #c4c4c4;
    }

    .rar-up {
        display: flex;
        align-items: center;
        width: 44px;
        height: 28px;
        padding-left: 10px;
        color: #666;
        border-right: 2px dotted #c4c4c4;
    }

    .rar-up svg {
        width: 12px;
        height: 12px;
        transform: rotate(90deg);
    }

    .rar-address {
        flex: 1;
        margin-left: 5px;
        padding: 2px;
        border: 1px solid #666;
    }

    .rar-list {
        flex: 1;
        border-top: 1px solid #444;
        background: linear-gradient(90deg, #fff 7px, #f5f5f5 7px);
    }

    .rar-head {
        height: 25px;
        padding-left: 8px;
        line-height: 26px;
        background: #fff;
    }

    .rar-row {
        display: flex;
        align-items: center;
        gap: 3px;
        height: 19px;
        margin-left: 7px;
        white-space: nowrap;
    }

    .rar-row.picked {
        background: #ececec;
    }

    .rar-row .fold {
        margin-left: 1px;
    }

    .rar-row.picked .fold {
        filter: hue-rotate(20deg) saturate(0.45) brightness(0.85);
    }

    .exe {
        width: 15px;
        height: 13px;
    }

    .dll {
        width: 13px;
        height: 15px;
        margin-left: 2px;
    }

    .rar-status {
        display: flex;
        align-items: center;
        gap: 3px;
        height: 25px;
        padding-left: 4px;
        background: #f3f3f3;
        border-top: 1px solid #555;
    }

    .rar-status span {
        margin-left: 2px;
        padding-left: 4px;
        line-height: 24px;
        border-left: 1px solid #ccc;
    }

    /* console */
    .cmd {
        inset: 131px 165px 39px 137px;
        border: 1px solid #4a4a4a;
        border-top: none;
    }

    .cmd-title {
        display: flex;
        align-items: center;
        gap: 5px;
        height: 30px;
        padding-left: 8px;
        color: #8e8e8e;
        border-top: 1px solid #b5b5b5;
    }

    .cmd-body {
        display: flex;
        flex: 1;
        justify-content: flex-end;
        background: #000;
    }

    .vbar {
        display: flex;
        flex-direction: column;
        align-items: center;
        width: 16px;
        padding: 6px 0;
        background: #f0f0f0;
    }

    .last {
        margin-top: auto;
    }

    .cmd-thumb {
        width: 15px;
        height: 17px;
        margin-top: 6px;
        background: #cdcdcd;
    }

    /* explorer windows */
    .dlls {
        inset: 14px 212px 74px 284px;
        border-top: 1px solid #1c5f9f;
    }

    .lib {
        inset: 40px 185px 47px 309px;
    }

    .titlebar {
        display: flex;
        align-items: center;
        height: 30px;
        padding-left: 10px;
        color: #000;
    }

    .titlebar .bar {
        width: 1px;
        height: 13px;
        background: #a5a5a5;
    }

    .titlebar .fold + .bar {
        margin: 0 11px 0 7px;
    }

    .titlebar .props {
        margin-right: 9px;
    }

    .titlebar .qat {
        margin: 3px 7px 0 7px;
    }

    .caption {
        margin-left: 7px;
    }

    .inactive .caption,
    .inactive .controls {
        color: #9a9a9a;
    }

    .tabs {
        display: flex;
        height: 25px;
        padding-top: 1px;
        color: #333;
        border-bottom: 1px solid #dadbdc;
    }

    .file-tab {
        width: 57px;
        color: #fff;
        background: #0560b0;
    }

    .tab {
        width: 58px;
        border: 1px solid transparent;
        border-bottom: none;
    }

    .tab.active {
        width: 53px;
        height: 24px;
        margin-left: 1px;
        background: #f5f6f7;
        border-color: #dadbdc;
    }

    .tabs-end {
        display: flex;
        align-items: center;
        gap: 9px;
        margin-left: auto;
        padding-right: 4px;
    }

    .help {
        width: 16px;
        height: 16px;
        border-radius: 50%;
        font-size: 12px;
        font-weight: 700;
        color: #fff;
        background: #1069bd;
    }

    .ribbon {
        display: flex;
        height: 92px;
        padding: 2px 3px 1px 0;
        background: #f5f6f7;
        border-bottom: 1px solid #dadbdc;
        line-height: 13px;
        color: #333;
    }

    .group {
        display: flex;
        flex-direction: column;
        border-right: 1px solid #dfe0e1;
        white-space: nowrap;
    }

    .group-body {
        display: flex;
        flex: 1;
        align-items: flex-start;
    }

    .group-name {
        height: 15px;
        text-align: center;
        color: #555;
    }

    .panes { width: 169px; }
    .layout { width: 252px; }
    .current { width: 83px; }
    .show { flex: 1; }
    .opts { width: 57px; }

    .big {
        display: flex;
        flex-direction: column;
        align-items: center;
        justify-content: space-between;
        height: 67px;
        color: #222;
    }

    .big .caret {
        display: inline-block;
        vertical-align: 2px;
    }

    .big.dim {
        color: #8a8a8a;
    }

    .pane-ico {
        width: 28px;
        height: 21px;
        margin-top: 10px;
    }

    .sort-ico {
        width: 28px;
        height: 28px;
        margin-top: 7px;
    }

    .hide-ico {
        width: 21px;
        height: 28px;
        margin-top: 7px;
    }

    .panes .big {
        width: 72px;
    }

    .stack {
        display: flex;
        flex-direction: column;
        gap: 13px;
        margin-left: -1px;
        padding-top: 13px;
    }

    .stack button {
        display: flex;
        align-items: center;
        gap: 3px;
        height: 16px;
    }

    .p16 {
        width: 16px;
        height: 12px;
    }

    .gallery {
        display: flex;
        width: 238px;
        margin: 4px 0 0 5px;
        background: #fff;
        border: 1px solid #dadbdc;
    }

    .views {
        display: grid;
        flex: 1;
        grid-template-columns: 1fr 1fr;
        grid-auto-rows: 20px;
    }

    .views button {
        display: flex;
        align-items: center;
        gap: 5px;
        padding-left: 1px;
        border: 1px solid transparent;
    }

    .views .chosen {
        background: #cde1fa;
        border-color: #6aa5e3;
    }

    .gallery-bar {
        display: flex;
        flex-direction: column;
        align-items: center;
        justify-content: space-around;
        width: 16px;
        background: #f5f6f7;
        border-left: 1px solid #e6e6e6;
    }

    .gallery-bar .flip {
        color: #b5b5b5;
    }

    .current .big {
        width: 48px;
    }

    .minis {
        display: flex;
        flex-direction: column;
        gap: 6px;
        padding-top: 5px;
    }

    .minis button {
        display: flex;
        align-items: center;
        gap: 5px;
        height: 16px;
        margin-left: 1px;
    }

    .checks {
        display: flex;
        flex-direction: column;
        gap: 6px;
        width: 134px;
        padding: 5px 0 0 7px;
    }

    .checks label {
        display: flex;
        align-items: center;
        gap: 7px;
        height: 16px;
    }

    .checks input {
        appearance: none;
        flex: none;
        width: 13px;
        height: 13px;
        margin: 0;
        border: 1px solid #444;
        background: #fff;
    }

    .checks input:checked::before {
        content: '';
        display: block;
        width: 8px;
        height: 4px;
        margin: 2px 0 0 1px;
        border: solid #111;
        border-width: 0 0 2px 2px;
        transform: rotate(-45deg);
    }

    .show .big {
        width: 84px;
    }

    .opts .big {
        width: 54px;
    }

    .address-row {
        display: flex;
        align-items: center;
        height: 35px;
        padding: 0 13px;
        color: #666;
    }

    .address-row > button {
        width: 29px;
    }

    .address-row > .recent {
        width: 17px;
    }

    .address-row > .go-up {
        width: 19px;
    }

    .address {
        display: flex;
        flex: 1;
        align-items: center;
        gap: 8px;
        height: 23px;
        padding-left: 4px;
        color: #111;
        border: 1px solid #d4d4d4;
    }

    .address-end {
        display: flex;
        align-items: center;
        gap: 3px;
        margin-left: auto;
    }

    .address-end button {
        width: 17px;
        height: 21px;
        padding-left: 3px;
        border-left: 1px solid #d4d4d4;
    }

    .search {
        display: flex;
        align-items: center;
        width: 202px;
        height: 23px;
        margin-left: 11px;
        padding: 0 8px;
        border: 1px solid #d4d4d4;
    }

    .search input {
        flex: 1;
        min-width: 0;
        padding: 0;
        border: none;
        outline: none;
        font: inherit;
    }

    .search input::placeholder {
        color: #666;
    }

    .content {
        display: flex;
        flex: 1;
        min-height: 0;
    }

    .tree {
        width: 140px;
        margin: 0;
        padding: 0;
        overflow: hidden;
        list-style: none;
        white-space: nowrap;
    }

    .tree li {
        display: flex;
        align-items: center;
        gap: 5px;
        height: 24px;
        padding-left: 33px;
    }

    .tree li.deep {
        padding-left: 41px;
    }

    .tree li .fold {
        margin-left: 2px;
    }

    .tree li.selected {
        background: #d9d9d9;
    }

    .tree-bar {
        margin-left: 1px;
    }

    .tree-thumb {
        width: 15px;
        height: 87px;
        margin-top: 185px;
        background: #cdcdcd;
    }

    .files {
        display: flex;
        flex: 1;
        flex-direction: column;
        min-width: 0;
        padding-left: 4px;
    }

    .files-main {
        display: flex;
        flex: 1;
        min-height: 0;
    }

    .list {
        flex: 1;
        min-width: 0;
        overflow: hidden;
    }

    table {
        width: 100%;
        margin-bottom: 1px;
        table-layout: fixed;
        border-collapse: separate;
        border-spacing: 0;
    }

    th {
        position: sticky;
        top: 0;
        height: 25px;
        padding: 0 0 0 6px;
        font-weight: 400;
        text-align: left;
        color: #4c607a;
        background: #fff;
        border-right: 1px solid #e5e5e5;
    }

    .c-name { padding-left: 17px; }
    .c-date { width: 144px; }
    .c-type { width: 120px; }
    .c-size { width: 72px; border-right: none; }

    .sort-mark {
        position: absolute;
        top: 0;
        left: 50%;
        width: 8px;
        height: 5px;
        transform: rotate(180deg);
        color: #777;
    }

    td {
        height: 21px;
        padding: 0 0 0 6px;
        color: #6d6d6d;
        white-space: nowrap;
    }

    td:first-child {
        padding-left: 20px;
        color: #111;
    }

    td:last-child {
        padding-left: 0;
        text-align: right;
    }

    .file {
        display: flex;
        align-items: center;
        gap: 6px;
    }

    .file svg {
        width: 12px;
        height: 16px;
    }

    .list-bar {
        margin-right: 1px;
    }

    .list-thumb {
        width: 15px;
        height: 30px;
        margin: auto 0 6px;
        background: #cdcdcd;
    }

    .hbar {
        display: flex;
        align-items: center;
        justify-content: space-between;
        height: 15px;
        margin-right: 18px;
        padding: 0 3px;
        background: #f0f0f0;
    }

    .h-thumb {
        flex: 1;
        height: 15px;
        margin: 0 20px 0 4px;
        background: #cdcdcd;
    }

    .statusbar {
        display: flex;
        align-items: center;
        justify-content: space-between;
        height: 25px;
        padding: 0 5px 0 15px;
        color: #2f456f;
    }

    .modes {
        display: flex;
    }

    .modes button {
        display: flex;
        align-items: center;
        justify-content: center;
        width: 22px;
        height: 22px;
        border: 1px solid transparent;
    }

    .modes .on {
        background: #cce8ff;
        border-color: #26a0da;
    }

    /* the window that lies under Lib */
    .dlls-ribbon {
        padding: 42px 0 0 8px;
    }

    .pin {
        align-self: flex-start;
    }

    .dlls-nav {
        flex: 1;
        padding: 11px 0 0 13px;
    }

    .dlls-selected {
        width: 140px;
        height: 24px;
        background: #d9d9d9;
    }

    .dlls .statusbar {
        padding-left: 14px;
    }

    /* watermark */
    .watermark {
        position: absolute;
        right: 49px;
        bottom: 8px;
        display: flex;
        align-items: center;
        gap: 6px;
        font-family: 'Roboto Condensed', 'Liberation Sans Narrow', 'Open Sans', sans-serif;
        font-size: 38px;
        line-height: 62px;
        color: rgba(200, 212, 234, 0.6);
    }

    .watermark svg {
        width: 56px;
        height: 62px;
        fill: none;
        stroke: currentColor;
        stroke-width: 4;
    }

    /* taskbar */
    .taskbar {
        display: flex;
        align-items: stretch;
        height: 40px;
        background: linear-gradient(90deg, #001a26 0%, #001822 50%, #000b1c 85%);
    }

    .start {
        display: flex;
        align-items: center;
        justify-content: center;
        width: 48px;
    }

    .task-search {
        display: flex;
        align-items: center;
        gap: 11px;
        width: 288px;
        padding-left: 12px;
        color: #222;
        background: #f2f2f2;
        border: 1px solid #c9c9c9;
        border-left: none;
    }

    .task-search svg {
        width: 17px;
        height: 17px;
    }

    .task-search input {
        flex: 1;
        min-width: 0;
        padding: 0;
        border: none;
        outline: none;
        background: none;
        font-family: 'Open Sans', sans-serif;
        font-size: 14px;
    }

    .task-search input::placeholder {
        color: #333;
    }

    .task {
        position: relative;
        display: flex;
        align-items: center;
        justify-content: center;
        width: 48px;
        margin-right: 1px;
    }

    .task.view {
        margin-right: 3px;
    }

    .task.current {
        background: #34464f;
        border-bottom: 2px solid #76b9ed;
    }

    .task.running::after {
        content: '';
        position: absolute;
        left: 4px;
        right: 4px;
        bottom: 0;
        height: 2px;
        background: #76b9ed;
    }

    .tray {
        display: flex;
        align-items: center;
        gap: 8px;
        margin-left: auto;
        margin-right: 4px;
        padding-right: 20px;
        border-right: 1px solid #4b5460;
    }

    .tray .chev {
        width: 12px;
        height: 7px;
        margin-right: 4px;
        color: #fff;
    }

    .cam {
        width: 12px;
        height: 16px;
        margin-right: 2px;
    }

    .clock {
        width: 56px;
        margin-right: 8px;
        font-family: 'Open Sans', sans-serif;
        font-size: 12px;
        line-height: 18px;
        text-align: center;
        color: #fff;
    }
</style>
